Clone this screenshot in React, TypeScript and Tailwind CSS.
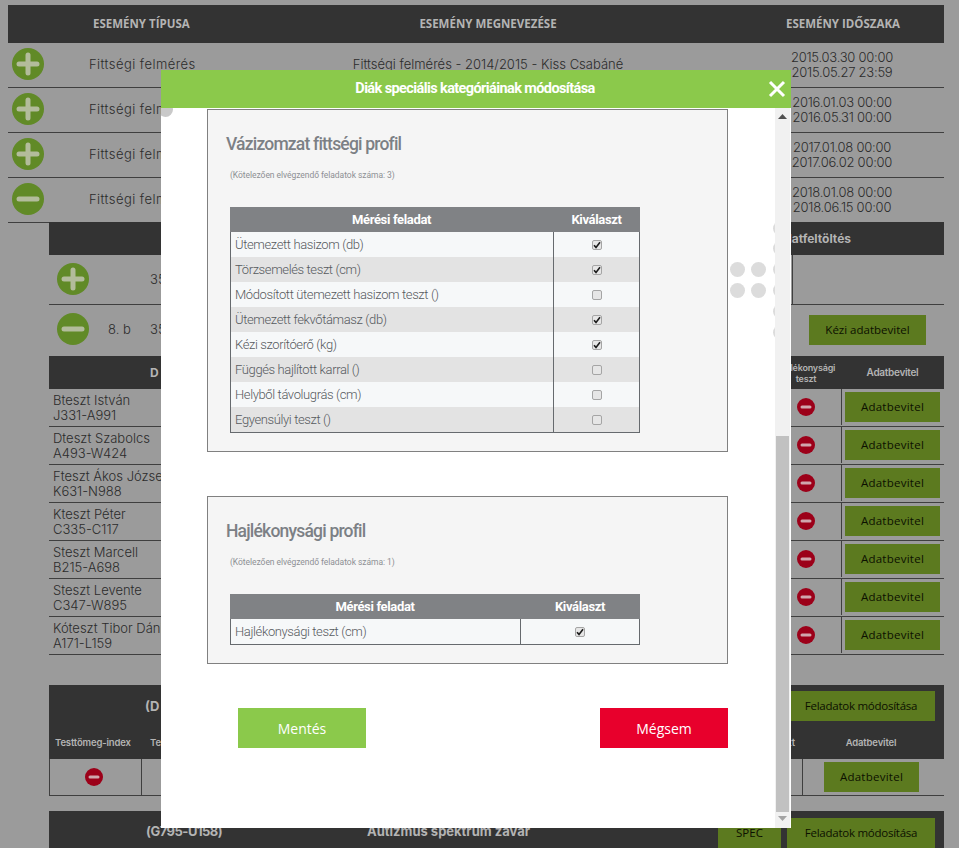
import React from "react";

const Plus = ({ minus, size = 32 }: { minus?: boolean; size?: number }) => (
  <svg width={size} height={size} viewBox="0 0 32 32" className="shrink-0 block">
    <circle cx="16" cy="16" r="16" fill="#618a27" />
    <path d="M7 16H25" stroke="#b3bc9c" strokeWidth="5" strokeLinecap="round" />
    {!minus && <path d="M16 7V25" stroke="#b3bc9c" strokeWidth="5" strokeLinecap="round" />}
  </svg>
);

const RedMinus = () => (
  <svg width="18" height="18" viewBox="0 0 18 18" className="block shrink-0">
    <circle cx="9" cy="9" r="9" fill="#9c0019" />
    <path d="M5 9H13" stroke="#cfa6ad" strokeWidth="3" strokeLinecap="round" />
  </svg>
);

const Btn = ({ w, children, cls = "" }: { w: string; children: React.ReactNode; cls?: string }) => (
  <div className={`${w} h-[30px] bg-[#5c7a1f] flex items-center justify-center text-[11.5px] font-normal text-[#0c1000] font-['Open_Sans',sans-serif] shrink-0 ${cls}`}>
    {children}
  </div>
);

const events = [
  ["2015.03.30 00:00", "2015.05.27 23:59", "Fittségi felmérés - 2014/2015 - Kiss Csabáné", false],
  ["2016.01.03 00:00", "2016.05.31 00:00", "", false],
  ["2017.01.08 00:00", "2017.06.02 00:00", "", false],
  ["2018.01.08 00:00", "2018.06.15 00:00", "", true],
] as const;

const students = [
  ["Bteszt István", "J331-A991"],
  ["Dteszt Szabolcs", "A493-W424"],
  ["Fteszt Ákos József", "K631-N988"],
  ["Kteszt Péter", "C335-C117"],
  ["Steszt Marcell", "B215-A698"],
  ["Steszt Levente", "C347-W895"],
  ["Kóteszt Tibor Dániel", "A171-L159"],
];

const Check = ({ on }: { on: boolean }) => (
  <span className="w-[10px] h-[10px] rounded-[2px] border border-[#a5a5a5] bg-[#e6e6e6] flex items-center justify-center">
    {on && (
      <svg width="8" height="8" viewBox="0 0 8 8" className="block">
        <path d="M1 4.2L3 6.4L7 1.2" fill="none" stroke="#1c1c1c" strokeWidth="1.6" />
      </svg>
    )}
  </span>
);

const Table = ({ split, rows }: { split: string; rows: [string, boolean][] }) => (
  <div className="w-[410px] mt-[25px] ml-[22px]">
    <div className="flex h-[25px] bg-[#808285] text-white font-bold text-[13px] tracking-[-0.35px] items-center">
      <div className={`${split} text-center`}>Mérési feladat</div>
      <div className="flex-1 text-center">Kiválaszt</div>
    </div>
    <div className="border-x border-b border-[#666a6e]">
      {rows.map(([t, on], i) => (
        <div key={t} className={`flex h-[25px] items-center ${i % 2 ? "bg-[#e3e3e3]" : "bg-[#f6f8f9]"}`}>
          <div className={`${split} h-full flex items-center pl-[4px] text-[13px] font-light tracking-[-0.38px] text-[#565a5e] border-r border-[#666a6e]`}>{t}</div>
          <div className="flex-1 flex justify-center"><Check on={on} /></div>
        </div>
      ))}
    </div>
  </div>
);

const Card = ({ title, sub, children, pb }: { title: string; sub: string; children: React.ReactNode; pb: string }) => (
  <div className={`ml-[46px] w-[521px] border border-[#808080] bg-[#f5f5f5] pt-[21px] ${pb}`}>
    <div className="ml-[18px] h-[26px] leading-[26px] text-[17.5px] font-medium tracking-[-0.8px] text-[#7c8085]">{title}</div>
    <div className="ml-[22px] mt-[11px] h-[14px] leading-[14px] text-[8.5px] tracking-[-0.05px] text-[#8d9094]">{sub}</div>
    {children}
  </div>
);

const Dot = ({ cls }: { cls: string }) => <div className={`absolute w-[15px] h-[15px] rounded-full bg-[#dcdcdc] ${cls}`} />;

export default function App() {
  return (
    <div className="relative w-[959px] h-[848px] overflow-hidden bg-[#9b9b9b] font-['Inter',sans-serif] text-[#2b2b2b]">
      {/* page behind the dialog */}
      <div className="pt-[5px] pl-[8px] w-[944px]">
        <div className="flex h-[38px] bg-[#333333] items-center font-['Open_Sans',sans-serif] font-bold text-[11.5px] tracking-[0px] text-[#b4b4b4]">
          <div className="w-[73px]" />
          <div className="w-[153px] pl-[12px]">ESEMÉNY TÍPUSA</div>
          <div className="w-[508px] text-center">ESEMÉNY MEGNEVEZÉSE</div>
          <div className="w-[202px] text-center">ESEMÉNY IDŐSZAKA</div>
        </div>
        {events.map(([a, b, name, minus]) => (
          <div key={a} className="flex h-[45px] items-center border-b border-[#3f3f3f] text-[13px] font-light tracking-[0.25px]">
            <div className="w-[73px] pl-[4px] mb-[3px]"><Plus minus={minus} /></div>
            <div className="w-[153px] pl-[8px] tracking-[0.45px]">Fittségi felmérés</div>
            <div className="w-[508px] text-center tracking-[0px]">{name}</div>
            <div className="w-[202px] text-center leading-[15px] tracking-[-0.25px] pr-[2px]">{a}<br />{b}</div>
          </div>
        ))}

        <div className="ml-[41px]">
          <div className="flex h-[33px] -mt-px bg-[#333333] items-center justify-end pr-[93px] text-[12px] font-bold text-[#b4b4b4]">Adatfeltöltés</div>
          <div className="flex h-[50px] items-center border-b border-[#3f3f3f] text-[13px] font-light">
            <div className="w-[101px] pl-[8px] mb-[2px]"><Plus /></div>
            <div className="flex-1">35</div>
            <div className="w-[152px] h-full border-l border-[#3f3f3f]" />
          </div>
          <div className="flex h-[50px] items-center text-[13px] font-light">
            <div className="w-[59px] pl-[8px] mb-[2px]"><Plus minus /></div>
            <div className="w-[42px]">8. b</div>
            <div className="flex-1">35</div>
            <Btn w="w-[117px]" cls="mr-[18px]">Kézi adatbevitel</Btn>
          </div>
          <div className="flex h-[33px] mt-px bg-[#333333] items-center text-[#b4b4b4] font-bold">
            <div className="pl-[101px] flex-1 text-[12px]">D</div>
            <div className="w-[70px] text-center text-[9px] leading-[11px] tracking-[-0.2px] font-semibold">Hajlékonysági<br />teszt</div>
            <div className="w-[103px] text-center text-[10px] tracking-[-0.3px] font-semibold">Adatbevitel</div>
          </div>
          {students.map(([n, c]) => (
            <div key={c} className="flex h-[38px] items-center border-b border-[#3f3f3f] text-[13px] font-light pb-px">
              <div className="flex-1 pl-[4px] pt-[2px] leading-[15px]">{n}<br />{c}</div>
              <div className="w-[70px] flex justify-center"><RedMinus /></div>
              <div className="w-px h-full bg-[#3f3f3f] mr-[3px]" />
              <Btn w="w-[95px]" cls="mr-[4px] tracking-[0.25px]">Adatbevitel</Btn>
            </div>
          ))}

          <div className="mt-[30px] h-[74px] bg-[#333333] flex flex-col">
            <div className="flex items-center h-[47px]">
              <div className="flex-1 pl-[96px] pb-[4px] text-[13px] font-bold text-[#b4b4b4]">(D</div>
              <Btn w="w-[148px]" cls="mr-[9px] mb-[6px] tracking-[-0.25px]">Feladatok módosítása</Btn>
            </div>
            <div className="flex items-center h-[27px] text-[9.5px] font-semibold tracking-[-0.15px] text-[#b4b4b4] pb-[5px]">
              <div className="w-[93px] pl-[6px] whitespace-nowrap">Testtömeg-index</div>
              <div className="pl-[8px] flex-1">Te</div>
              <div className="text-right">Teszt</div>
              <div className="w-[149px] text-center pl-[3px]">Adatbevitel</div>
            </div>
          </div>
          <div className="flex h-[37px] items-center border-b border-l border-[#3f3f3f]">
            <div className="w-[92px] h-full flex items-center justify-center border-r border-[#3f3f3f] pr-[3px] pb-px"><RedMinus /></div>
            <div className="flex-1" />
            <div className="w-[142px] h-full flex items-center justify-start border-l border-[#3f3f3f] pl-[21px]">
              <Btn w="w-[95px]" cls="tracking-[0.25px]">Adatbevitel</Btn>
            </div>
          </div>

          <div className="mt-[15px] h-[37px] bg-[#333333] flex items-center text-[#b4b4b4] text-[13px] font-bold">
            <div className="w-[318px] pl-[97px] pt-[5px] tracking-[-0.5px]">(G795-U158)</div>
            <div className="flex-1 pt-[5px]">Autizmus spektrum zavar</div>
            <Btn w="w-[63px]" cls="mt-[6px] mr-[6px]">SPEC</Btn>
            <Btn w="w-[148px]" cls="mt-[6px] mr-[9px] tracking-[-0.25px]">Feladatok módosítása</Btn>
          </div>
        </div>
      </div>

      {/* dialog */}
      <div className="absolute left-[161px] top-[70px] w-[630px] h-[758px] bg-white overflow-hidden flex flex-col font-['Roboto',sans-serif]">
        <Dot cls="left-[-3px] top-[32px] !bg-[#c9c9c9]" />
        <Dot cls="left-[569px] top-[192px]" />
        <Dot cls="left-[590px] top-[192px]" />
        <Dot cls="left-[569px] top-[213px]" />
        <Dot cls="left-[590px] top-[213px]" />
        {[151, 171, 192, 213, 234, 255].map((t) => (
          <div key={t} className="absolute left-[612px] w-[15px] h-[15px] rounded-full bg-[#dcdcdc]" style={{ top: t }} />
        ))}
        <div className="relative z-10 h-[38px] shrink-0 bg-[#8bc94b] flex items-center justify-center text-white font-bold text-[14.5px] tracking-[-0.6px]">
          <span className="ml-[-2px]">Diák speciális kategóriáinak módosítása</span>
          <svg width="18" height="18" viewBox="0 0 18 18" className="absolute right-[5px] top-[10px]">
            <path d="M2 2L16 16M16 2L2 16" stroke="#fff" strokeWidth="3" />
          </svg>
        </div>
        <div className="flex-1 flex min-h-0">
          <div className="w-[614px] relative z-[1] pt-px">
            <Card title="Vázizomzat fittségi profil" sub="(Kötelezően elvégzendő feladatok száma: 3)" pb="pb-[18px]">
              <Table
                split="w-[323px]"
                rows={[
                  ["Ütemezett hasizom (db)", true],
                  ["Törzsemelés teszt (cm)", true],
                  ["Módosított ütemezett hasizom teszt ()", false],
                  ["Ütemezett fekvőtámasz (db)", true],
                  ["Kézi szorítóerő (kg)", true],
                  ["Függés hajlított karral ()", false],
                  ["Helyből távolugrás (cm)", false],
                  ["Egyensúlyi teszt ()", false],
                ]}
              />
            </Card>
            <div className="h-[44px]" />
            <Card title="Hajlékonysági profil" sub="(Kötelezően elvégzendő feladatok száma: 1)" pb="pb-[18px]">
              <Table split="w-[290px]" rows={[["Hajlékonysági teszt (cm)", true]]} />
            </Card>
            <div className="flex justify-between ml-[77px] w-[490px] mt-[44px] text-white text-[14px] font-['Open_Sans',sans-serif]">
              <div className="w-[128px] h-[40px] bg-[#8bc94b] flex items-center justify-center">Mentés</div>
              <div className="w-[128px] h-[40px] bg-[#e8002c] flex items-center justify-center">Mégsem</div>
            </div>
          </div>
          <div className="relative z-10 w-[15px] bg-[#f1f1f1] flex flex-col items-center">
            <svg width="9" height="5" viewBox="0 0 9 5" className="mt-[6px] block"><path d="M4.5 0L9 5H0Z" fill="#505050" /></svg>
            <div className="w-[13px] h-[376px] mt-[317px] bg-[#c1c1c1]" />
            <svg width="9" height="5" viewBox="0 0 9 5" className="mt-[4px] block"><path d="M0 0H9L4.5 5Z" fill="#a3a3a3" /></svg>
          </div>
        </div>
      </div>
    </div>
  );
}
